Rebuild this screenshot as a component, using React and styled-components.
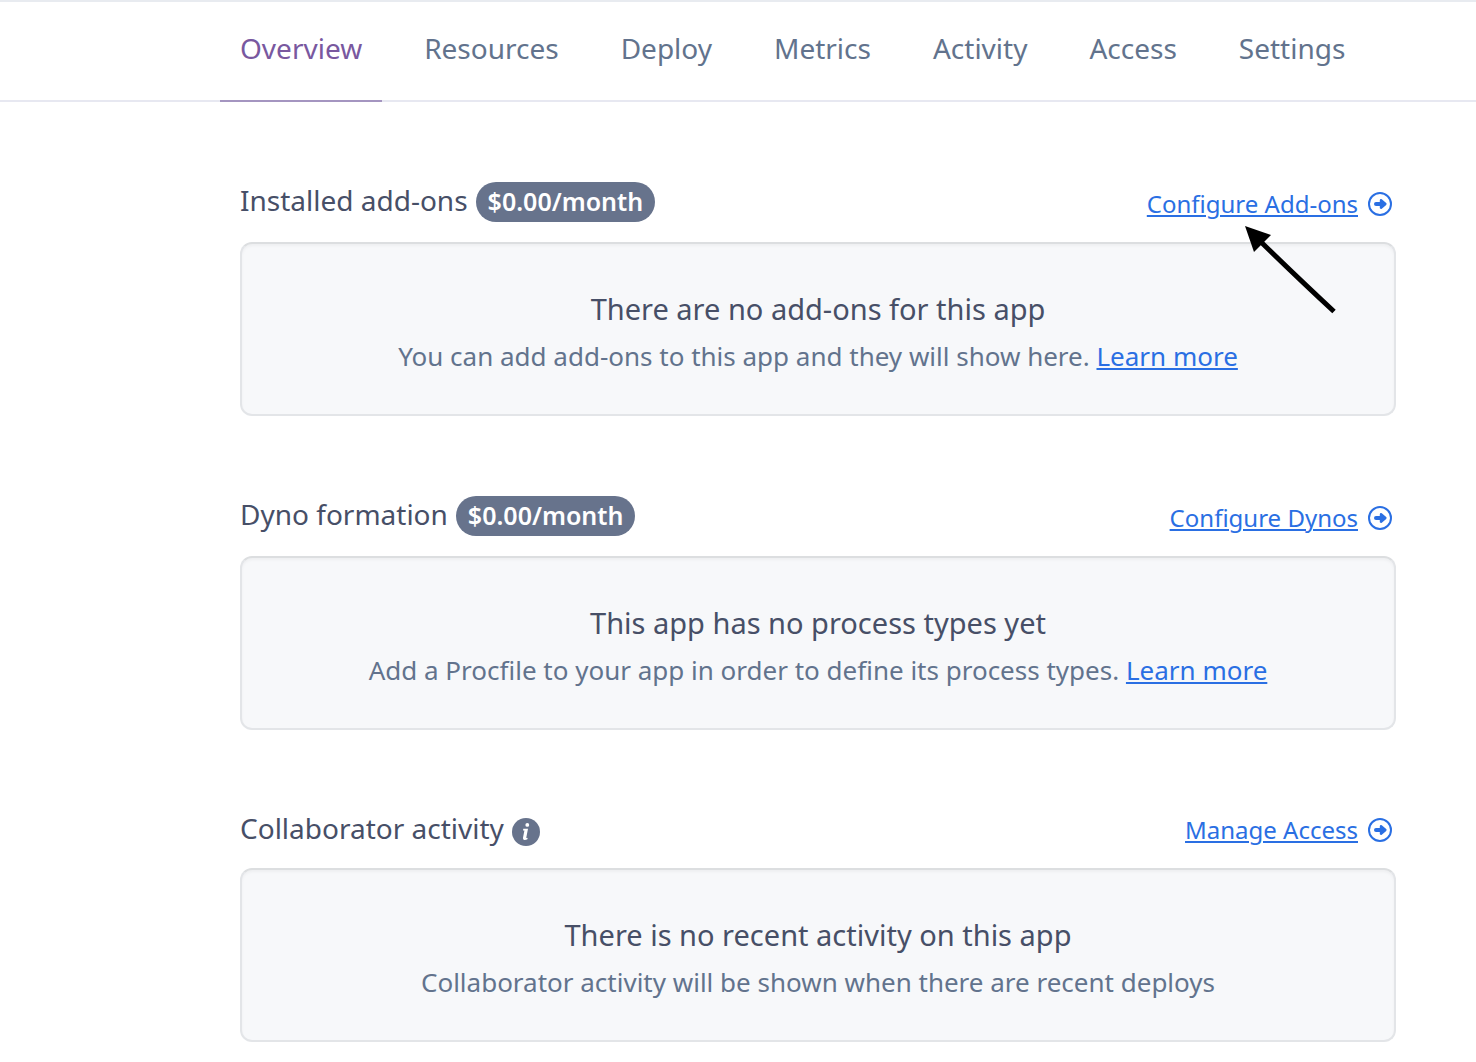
import React from "react";
import styled, { createGlobalStyle } from "styled-components";

const GlobalStyle = createGlobalStyle`
  *, *::before, *::after { box-sizing: border-box; }
  body {
    margin: 0;
    background: #fff;
    color: #474f67;
    font-family: "Noto Sans", "Open Sans", sans-serif;
    font-weight: 400;
  }
  h2, h3, p { margin: 0; font-weight: inherit; }
`;

const TabBar = styled.nav`
  display: flex;
  gap: 22px;
  height: 102px;
  padding-left: 220px;
  border-top: 2px solid #e8ebf0;
  box-shadow: inset 0 -2px #e7e8f1;
`;

const Tab = styled.a`
  padding: 26px 20px 0;
  font-size: 28px;
  line-height: 40px;
  text-decoration: none;
  white-space: nowrap;
  color: ${(p) => (p.$active ? "#79589f" : "#62738d")};
  border-bottom: 2px solid ${(p) => (p.$active ? "#a495c0" : "transparent")};
`;

const Content = styled.main`
  display: flex;
  flex-direction: column;
  gap: 80px;
  padding: 80px 80px 20px 240px;
`;

const SectionHeader = styled.header`
  display: flex;
  align-items: flex-end;
  justify-content: space-between;
  min-height: 38px;
  margin-bottom: 20px;
`;

const TitleGroup = styled.div`
  display: flex;
  align-items: flex-start;
  gap: 8px;
`;

const Title = styled.h2`
  font-size: 28px;
  line-height: 36px;
`;

const Price = styled.span`
  padding: 0 12px 2px;
  border-radius: 20px;
  background: #67738c;
  color: #fff;
  font-size: 25px;
  font-weight: 600;
  line-height: 38px;
`;

const InfoButton = styled.button`
  display: flex;
  padding: 8px 0 2px;
  border: 0;
  background: none;
`;

const Link = styled.a`
  color: #2a6fe3;
  text-decoration: underline;
  text-decoration-thickness: 2px;
  text-underline-offset: 2px;
`;

const ConfigureLink = styled.div`
  display: flex;
  align-items: center;
  gap: 10px;
  padding-right: 4px;
  font-size: 24px;
  line-height: 36px;
`;

const Panel = styled.div`
  padding: 43px 24px 38px;
  border: 2px solid #e3e5e8;
  border-top-color: #dcdee0;
  border-radius: 12px;
  background: #f7f8fa;
  box-shadow: inset 0 2px 3px rgba(0, 0, 0, 0.04);
  text-align: center;
`;

const PanelTitle = styled.h3`
  font-size: 29px;
  line-height: 44px;
`;

const PanelText = styled.p`
  padding-top: 5px;
  color: #62738d;
  font-size: 26px;
  line-height: 40px;
`;

const Pointer = styled.svg`
  position: absolute;
  top: 226px;
  right: 140px;
  pointer-events: none;
`;

function ArrowIcon() {
  return (
    <svg width="24" height="24" viewBox="0 0 24 24" aria-hidden="true">
      <circle cx="12" cy="12" r="11" fill="none" stroke="#2a6fe3" strokeWidth="2" />
      <path
        d="M13 8.2 17.4 12 13 15.8Z"
        fill="#2a6fe3"
        stroke="#2a6fe3"
        strokeLinejoin="round"
        strokeWidth="2.4"
      />
      <path d="M8 12H14" stroke="#2a6fe3" strokeWidth="4" strokeLinecap="round" />
    </svg>
  );
}

function InfoIcon() {
  return (
    <svg width="28" height="28" viewBox="0 0 28 28" aria-hidden="true">
      <circle cx="14" cy="14" r="14" fill="#67738c" />
      <circle cx="15.3" cy="6.9" r="1.9" fill="#fff" />
      <path
        d="M11.3 10.8H16L14.3 19.4Q14.2 20.3 15.7 19.8L15.4 21.3Q13.8 22.2 12.3 22Q10.6 21.7 11 19.8L12.4 12.5H11Z"
        fill="#fff"
      />
    </svg>
  );
}

const tabs = ["Overview", "Resources", "Deploy", "Metrics", "Activity", "Access", "Settings"];

const sections = [
  {
    title: "Installed add-ons",
    price: "$0.00/month",
    action: "Configure Add-ons",
    heading: "There are no add-ons for this app",
    text: "You can add add-ons to this app and they will show here.",
    more: true,
  },
  {
    title: "Dyno formation",
    price: "$0.00/month",
    action: "Configure Dynos",
    heading: "This app has no process types yet",
    text: "Add a Procfile to your app in order to define its process types.",
    more: true,
  },
  {
    title: "Collaborator activity",
    action: "Manage Access",
    heading: "There is no recent activity on this app",
    text: "Collaborator activity will be shown when there are recent deploys",
  },
];

function Section({ title, price, action, heading, text, more }) {
  return (
    <section>
      <SectionHeader>
        <TitleGroup>
          <Title>{title}</Title>
          {price ? (
            <Price>{price}</Price>
          ) : (
            <InfoButton type="button" aria-label={`About ${title}`}>
              <InfoIcon />
            </InfoButton>
          )}
        </TitleGroup>
        <ConfigureLink>
          <Link href="#">{action}</Link>
          <ArrowIcon />
        </ConfigureLink>
      </SectionHeader>
      <Panel>
        <PanelTitle>{heading}</PanelTitle>
        <PanelText>
          {text}
          {more && <> <Link href="#">Learn more</Link></>}
        </PanelText>
      </Panel>
    </section>
  );
}

export default function App() {
  return (
    <>
      <GlobalStyle />
      <TabBar>
        {tabs.map((name, i) => (
          <Tab key={name} href="#" $active={i === 0} aria-current={i === 0 ? "page" : undefined}>
            {name}
          </Tab>
        ))}
      </TabBar>
      <Content>
        {sections.map((s) => (
          <Section key={s.title} {...s} />
        ))}
      </Content>
      <Pointer width="92" height="88" viewBox="0 0 92 88" aria-hidden="true">
        <path d="M1 0 27 9 10 26Z" fill="#000" />
        <path d="M17 16Q55 53 90 85.5" fill="none" stroke="#000" strokeWidth="5" />
      </Pointer>
    </>
  );
}
